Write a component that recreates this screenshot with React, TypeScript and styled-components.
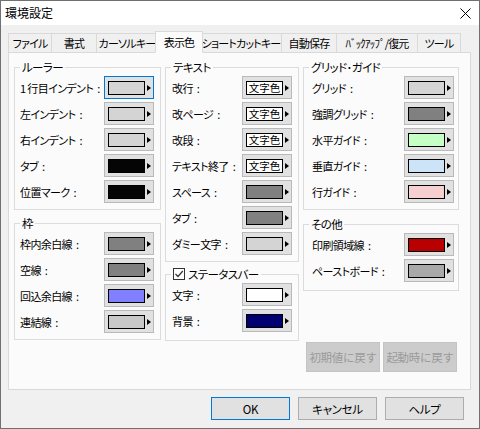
import React from 'react';
import styled, { createGlobalStyle } from 'styled-components';

const GlobalStyle = createGlobalStyle`
  html, body { margin: 0; padding: 0; background: #ffffff; }
  body {
    font-family: "Noto Sans CJK JP", "Noto Sans", sans-serif;
    font-size: 12px;
    color: #000;
  }
  * { box-sizing: border-box; }
`;

const Window = styled.div`
  width: 480px;
  height: 429px;
  border: 1px solid #707070;
  background: #f0f0f0;
  display: flex;
  flex-direction: column;
  overflow: hidden;
`;

const TitleBar = styled.div`
  height: 24px;
  flex: none;
  background: #ffffff;
  display: flex;
  align-items: center;
  justify-content: space-between;
  padding: 0 8px 0 4px;
`;

const Title = styled.span`
  font-size: 12px;
  line-height: 16px;
`;

const Body = styled.div`
  flex: 1;
  display: flex;
  flex-direction: column;
  padding: 6px 8px 0 7px;
`;

const TabStrip = styled.div`
  display: flex;
  align-items: flex-end;
  height: 22px;
  position: relative;
  z-index: 1;
`;

const Tab = styled.div<{ $w: number; $active?: boolean }>`
  width: ${p => (p.$active ? p.$w + 4 : p.$w)}px;
  height: ${p => (p.$active ? 22 : 20)}px;
  margin-left: ${p => (p.$active ? -3 : -1)}px;
  margin-right: ${p => (p.$active ? -2 : 0)}px;
  border: 1px solid #d9d9d9;
  border-bottom-color: ${p => (p.$active ? '#fbfbfb' : '#d9d9d9')};
  background: ${p => (p.$active ? '#fbfbfb' : '#f0f0f0')};
  position: relative;
  z-index: ${p => (p.$active ? 2 : 1)};
  display: flex;
  justify-content: center;
  align-items: ${p => (p.$active ? 'flex-start' : 'center')};
  padding-top: ${p => (p.$active ? 2 : 0)}px;
  font-size: 11px;
  line-height: 16px;
  white-space: nowrap;
  font-feature-settings: "palt";
  letter-spacing: -0.8px;
  &:first-child { margin-left: 0; }
`;

const Panel = styled.div`
  height: 338px;
  margin-top: -1px;
  border: 1px solid #d9d9d9;
  background: #fbfbfb;
  display: grid;
  grid-template-columns: 147px 134px 156px;
  column-gap: 4px;
  padding: 14px 11px 0 5px;
  align-items: start;
`;

const Column = styled.div<{ $gap: number }>`
  display: flex;
  flex-direction: column;
  gap: ${p => p.$gap}px;
`;

const Group = styled.div<{ $pl: number; $pr: number; $pb?: number }>`
  position: relative;
  border: 1px solid #dcdcdc;
  padding: 8px ${p => p.$pr}px ${p => p.$pb ?? 6}px ${p => p.$pl}px;
  display: flex;
  flex-direction: column;
  gap: 3px;
`;

const Legend = styled.div`
  position: absolute;
  top: -9px;
  left: 5px;
  padding: 0 2px;
  background: #fbfbfb;
  display: flex;
  align-items: center;
  gap: 2px;
  font-size: 11.5px;
  line-height: 16px;
  font-feature-settings: "palt";
  letter-spacing: -0.6px;
`;

const CheckBox = styled.span`
  width: 12px;
  height: 12px;
  border: 1px solid #333333;
  background: #ffffff;
  display: inline-flex;
  align-items: center;
  justify-content: center;
  margin-right: 1px;
`;

const Row = styled.div`
  height: 23px;
  display: flex;
  align-items: center;
  justify-content: space-between;
`;

const Label = styled.span`
  font-size: 11px;
  line-height: 16px;
  white-space: pre;
  font-feature-settings: "palt";
  letter-spacing: -0.6px;
`;

const Colon = styled.span`
  margin-left: 4px;
  letter-spacing: 0;
`;

const ColorButton = styled.div<{ $focused?: boolean }>`
  width: 50px;
  height: 23px;
  flex: none;
  border: 1px solid ${p => (p.$focused ? '#0078d7' : '#b9b9b9')};
  background: #e1e1e1;
  display: flex;
  align-items: center;
  padding-left: 3px;
  gap: 2px;
`;

const Swatch = styled.div<{ $color: string }>`
  width: 37px;
  height: 14px;
  flex: none;
  border: 1px solid #000;
  background: ${p => p.$color};
  display: flex;
  align-items: center;
  justify-content: center;
  font-size: 10.5px;
  line-height: 12px;
  white-space: nowrap;
  overflow: hidden;
`;

const Arrow = styled.span`
  width: 0;
  height: 0;
  flex: none;
  border-left: 4px solid #000;
  border-top: 3.5px solid transparent;
  border-bottom: 3.5px solid transparent;
`;

const ResetRow = styled.div`
  display: flex;
  gap: 3px;
  padding-left: 3px;
  margin-top: 37px;
`;

const ResetButton = styled.div`
  width: 74px;
  height: 30px;
  background: #cccccc;
  border: 1px solid #c4c4c4;
  color: #9a9a9a;
  display: flex;
  align-items: center;
  justify-content: center;
  font-size: 11.5px;
  letter-spacing: -0.3px;
  white-space: nowrap;
`;

const Footer = styled.div`
  display: flex;
  justify-content: flex-end;
  gap: 8px;
  margin-top: 7px;
  padding-right: 7px;
`;

const DialogButton = styled.div<{ $default?: boolean }>`
  width: 79px;
  height: 23px;
  background: #e1e1e1;
  border: 1px solid ${p => (p.$default ? '#0078d7' : '#adadad')};
  display: flex;
  align-items: center;
  justify-content: center;
  font-size: 11.5px;
  font-feature-settings: "palt";
  letter-spacing: -0.3px;
`;

type Item = { label: string; color: string; text?: boolean; focused?: boolean };

const GRAY_LIGHT = '#d4d4d4';
const GRAY = '#808080';

const ruler: Item[] = [
  { label: '1 行目インデント', color: GRAY_LIGHT, focused: true },
  { label: '左インデント', color: GRAY_LIGHT },
  { label: '右インデント', color: GRAY_LIGHT },
  { label: 'タブ', color: '#050505' },
  { label: '位置マーク', color: '#050505' },
];

const frame: Item[] = [
  { label: '枠内余白線', color: GRAY },
  { label: '空線', color: GRAY },
  { label: '回込余白線', color: '#8080ff' },
  { label: '連結線', color: '#c8c8c8' },
];

const text: Item[] = [
  { label: '改行', color: '#ffffff', text: true },
  { label: '改ページ', color: '#ffffff', text: true },
  { label: '改段', color: '#ffffff', text: true },
  { label: 'テキスト終了', color: '#ffffff', text: true },
  { label: 'スペース', color: GRAY },
  { label: 'タブ', color: GRAY },
  { label: 'ダミー文字', color: GRAY_LIGHT },
];

const status: Item[] = [
  { label: '文字', color: '#ffffff' },
  { label: '背景', color: '#000070' },
];

const grid: Item[] = [
  { label: 'グリッド', color: GRAY_LIGHT },
  { label: '強調グリッド', color: GRAY },
  { label: '水平ガイド', color: '#c4ffc4' },
  { label: '垂直ガイド', color: '#cde4f8' },
  { label: '行ガイド', color: '#f6d0d0' },
];

const other: Item[] = [
  { label: '印刷領域線', color: '#b80000' },
  { label: 'ペーストボード', color: '#a9a9a9' },
];

const tabs = [
  { label: 'ファイル', w: 44 },
  { label: '書式', w: 46 },
  { label: 'カーソルキー', w: 62 },
  { label: '表示色', w: 44, active: true },
  { label: 'ショートカットキー', w: 82 },
  { label: '自動保存', w: 56 },
  { label: 'ﾊﾞｯｸｱｯﾌﾟ/復元', w: 82 },
  { label: 'ツール', w: 44 },
];

const Rows: React.FC<{ items: Item[] }> = ({ items }) => (
  <>
    {items.map(it => (
      <Row key={it.label}>
        <Label>
          {it.label}
          <Colon>:</Colon>
        </Label>
        <ColorButton $focused={it.focused}>
          <Swatch $color={it.color}>{it.text ? '文字色' : null}</Swatch>
          <Arrow />
        </ColorButton>
      </Row>
    ))}
  </>
);

const CloseIcon = () => (
  <svg width="11" height="11" viewBox="0 0 11 11">
    <path d="M0.5 0.5 L10.5 10.5 M10.5 0.5 L0.5 10.5" stroke="#000" strokeWidth="1" />
  </svg>
);

const CheckMark = () => (
  <svg width="10" height="10" viewBox="0 0 10 10">
    <path d="M1.5 5 L4 7.5 L8.8 2" stroke="#333" strokeWidth="1.2" fill="none" />
  </svg>
);

const App: React.FC = () => (
  <>
    <GlobalStyle />
    <Window>
      <TitleBar>
        <Title>環境設定</Title>
        <CloseIcon />
      </TitleBar>
      <Body>
        <TabStrip>
          {tabs.map(t => (
            <Tab key={t.label} $w={t.w} $active={t.active}>
              {t.label}
            </Tab>
          ))}
        </TabStrip>
        <Panel>
          <Column $gap={13}>
            <Group $pl={5} $pr={6}>
              <Legend>ルーラー</Legend>
              <Rows items={ruler} />
            </Group>
            <Group $pl={5} $pr={6}>
              <Legend>枠</Legend>
              <Rows items={frame} />
            </Group>
          </Column>
          <Column $gap={12}>
            <Group $pl={6} $pr={6}>
              <Legend>テキスト</Legend>
              <Rows items={text} />
            </Group>
            <Group $pl={6} $pr={6} $pb={8}>
              <Legend>
                <CheckBox>
                  <CheckMark />
                </CheckBox>
                ステータスバー
              </Legend>
              <Rows items={status} />
            </Group>
          </Column>
          <Column $gap={14}>
            <Group $pl={8} $pr={4}>
              <Legend>グリッド･ガイド</Legend>
              <Rows items={grid} />
            </Group>
            <Group $pl={8} $pr={4} $pb={8}>
              <Legend>その他</Legend>
              <Rows items={other} />
            </Group>
            <ResetRow>
              <ResetButton>初期値に戻す</ResetButton>
              <ResetButton>起動時に戻す</ResetButton>
            </ResetRow>
          </Column>
        </Panel>
        <Footer>
          <DialogButton $default>OK</DialogButton>
          <DialogButton>キャンセル</DialogButton>
          <DialogButton>ヘルプ</DialogButton>
        </Footer>
      </Body>
    </Window>
  </>
);

export default App;
